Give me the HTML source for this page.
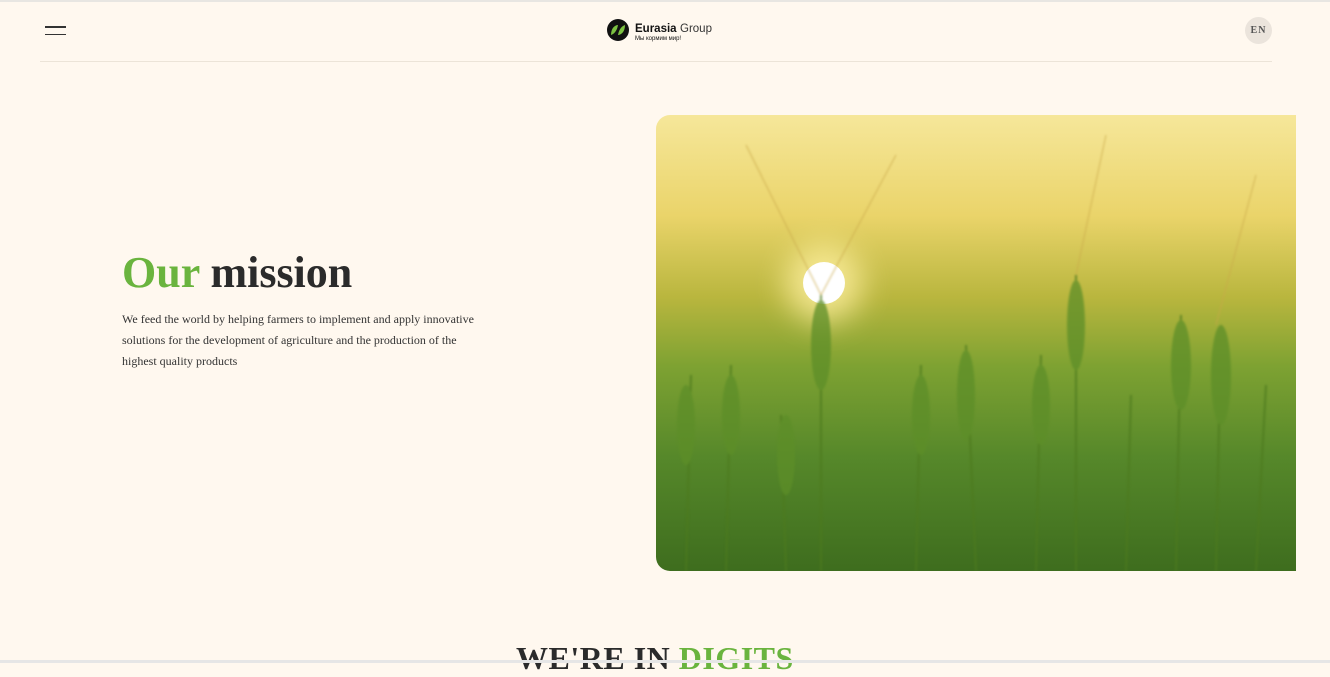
<!DOCTYPE html>
<html><head><meta charset="utf-8"><style>
*{margin:0;padding:0;box-sizing:border-box}
body{width:1330px;height:663px;overflow:hidden;background:#fff8ef;font-family:"Liberation Serif",serif;position:relative}
.top{position:absolute;left:0;top:0;width:1330px;height:2px;background:#e8e6e2}
.hdr{position:absolute;left:40px;top:61px;width:1232px;height:1px;background:#ece4d8}
.burger{position:absolute;left:45px;top:26px;width:21px}
.burger i{display:block;height:1.5px;background:#333;margin-bottom:6px}
.en{position:absolute;left:1245px;top:17px;width:27px;height:27px;border-radius:50%;background:#ebe4dc;font-size:10px;font-weight:bold;color:#555;text-align:center;line-height:27px;letter-spacing:1px}
.logo{position:absolute;left:606px;top:18px}
h1{position:absolute;left:122px;top:247px;font-size:44px;font-weight:bold;color:#2b2b2b}
h1 span{color:#6ab43e}
p{position:absolute;left:122px;top:309px;width:370px;font-size:12px;line-height:21px;color:#333}
.img{position:absolute;left:656px;top:115px;width:640px;height:456px;border-radius:14px 0 0 14px;overflow:hidden;
background:linear-gradient(180deg,#f6e79a 0%,#ead46a 22%,#b9b63e 40%,#7ea232 55%,#56882a 75%,#3e6d1e 100%)}
.sun{position:absolute;left:147px;top:147px;width:42px;height:42px;border-radius:50%;background:#fff;box-shadow:0 0 30px 18px rgba(255,240,160,.8)}
h2{position:absolute;left:516px;top:640px;font-size:32px;font-weight:bold;color:#2b2b2b;letter-spacing:0.5px}
h2 span{color:#6ab43e}
.bot{position:absolute;left:0;top:660px;width:1330px;height:3px;background:#e6e6e6;z-index:2}
</style></head><body>
<div class="top"></div>
<div class="burger"><i></i><i></i></div>
<div class="logo"><svg width="110" height="26" viewBox="0 0 110 26"><circle cx="12" cy="12" r="11" fill="#111"/><path d="M5 17 C5 10 9 7 12 7 C11 13 8 16 5 17Z" fill="#7cc242"/><path d="M19 7 C19 14 15 17 12 17 C13 11 16 8 19 7Z" fill="#7cc242"/><text x="29" y="14" font-family="Liberation Sans" font-size="11.5" font-weight="bold" fill="#111">Eurasia</text><text x="74" y="14" font-family="Liberation Sans" font-size="11.5" fill="#333">Group</text><text x="29" y="22" font-family="Liberation Sans" font-size="6" fill="#111">Мы кормим мир!</text></svg></div>
<div class="en">EN</div>
<div class="hdr"></div>
<h1><span>Our</span> mission</h1>
<p>We feed the world by helping farmers to implement and apply innovative solutions for the development of agriculture and the production of the highest quality products</p>
<div class="img"><div class="sun"></div>
<svg width="640" height="456" style="position:absolute;left:0;top:0;filter:blur(1px)" stroke="#4d7a1e" stroke-width="2" fill="none" opacity=".75">
<path d="M165 456 L165 180 M30 456 L35 260 M130 456 L125 300 M260 456 L265 250 M320 456 L310 230 M380 456 L385 240 M420 456 L420 160 M470 456 L475 280 M520 456 L525 200 M560 456 L565 210 M600 456 L610 270 M70 456 L75 250"/>
<path d="M165 180 L90 30 M165 180 L240 40 M420 160 L450 20 M560 210 L600 60" stroke="#c9a84a" stroke-width="1"/>
<g fill="#5d8e28" stroke="none"><ellipse cx="165" cy="230" rx="10" ry="45"/><ellipse cx="30" cy="310" rx="9" ry="40"/><ellipse cx="130" cy="340" rx="9" ry="40"/><ellipse cx="265" cy="300" rx="9" ry="40"/><ellipse cx="310" cy="280" rx="9" ry="45"/><ellipse cx="385" cy="290" rx="9" ry="40"/><ellipse cx="420" cy="210" rx="9" ry="45"/><ellipse cx="525" cy="250" rx="10" ry="45"/><ellipse cx="565" cy="260" rx="10" ry="50"/><ellipse cx="75" cy="300" rx="9" ry="40"/></g></svg>
</div>
<h2>WE'RE IN <span>DIGITS</span></h2>
<div class="bot"></div>
</body></html>
